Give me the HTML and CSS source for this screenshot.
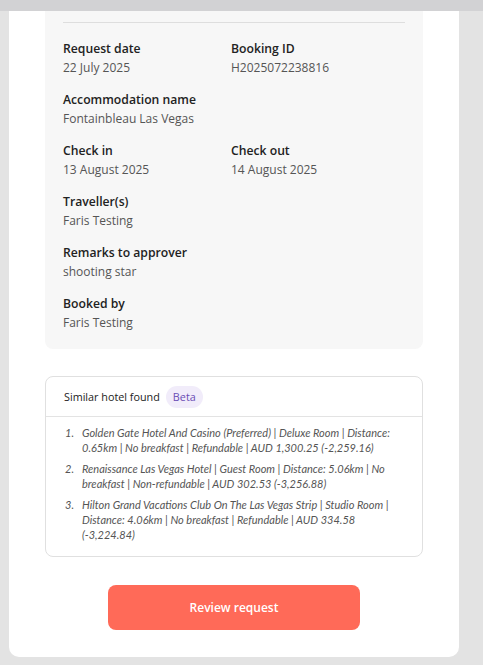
FILE: index.html
```html
<!DOCTYPE html>
<html lang="en">
<head>
    <meta charset="UTF-8">
    <title>Booking approval</title>
    <link rel="stylesheet" href="styles.css">
</head>
<body>
    <div class="topbar"></div>

    <div class="sheet">
        <div class="details">
            <h2 class="details-title">Booking details</h2>

            <div class="fields">
                <div class="field">
                    <div class="label">Request date</div>
                    <div class="value">22 July 2025</div>
                </div>
                <div class="field">
                    <div class="label">Booking ID</div>
                    <div class="value">H2025072238816</div>
                </div>
                <div class="field wide">
                    <div class="label">Accommodation name</div>
                    <div class="value">Fontainbleau Las Vegas</div>
                </div>
                <div class="field">
                    <div class="label">Check in</div>
                    <div class="value">13 August 2025</div>
                </div>
                <div class="field">
                    <div class="label">Check out</div>
                    <div class="value">14 August 2025</div>
                </div>
                <div class="field wide">
                    <div class="label">Traveller(s)</div>
                    <div class="value">Faris Testing</div>
                </div>
                <div class="field wide">
                    <div class="label">Remarks to approver</div>
                    <div class="value">shooting star</div>
                </div>
                <div class="field wide">
                    <div class="label">Booked by</div>
                    <div class="value">Faris Testing</div>
                </div>
            </div>
        </div>

        <div class="similar">
            <div class="similar-head">
                <span>Similar hotel found</span>
                <span class="badge">Beta</span>
            </div>
            <ol class="similar-list">
                <li>Golden Gate Hotel And Casino (Preferred) | Deluxe Room | Distance: 0.65km | No breakfast | Refundable | AUD 1,300.25 (-2,259.16)</li>
                <li>Renaissance Las Vegas Hotel | Guest Room | Distance: 5.06km | No breakfast | Non-refundable | AUD 302.53 (-3,256.88)</li>
                <li>Hilton Grand Vacations Club On The Las Vegas Strip | Studio Room | Distance: 4.06km | No breakfast | Refundable | AUD 334.58 (-3,224.84)</li>
            </ol>
        </div>

        <div class="actions">
            <button class="review-btn">Review request</button>
        </div>
    </div>
</body>
</html>
```

FILE: styles.css
```css
body {
    margin: 0;
    background-color: #e3e3e3;
    font-family: "Open Sans", "Noto Sans", Arial, sans-serif;
    color: #222;
}
.topbar {
    position: fixed;
    top: 0;
    left: 0;
    right: 0;
    height: 11px;
    background-color: #d2d2d4;
    z-index: 10;
}
.sheet {
    width: 378px;
    margin: -20px 0 0 9px;
    padding: 0 36px 27px;
    background-color: #fff;
    border-radius: 0 0 10px 10px;
}
.details {
    background-color: #f7f7f7;
    border-radius: 0 0 8px 8px;
    padding: 12px 18px 17px;
}
.details-title {
    margin: 0;
    padding-bottom: 9px;
    border-bottom: 1px solid #dedede;
    font-size: 14px;
    line-height: 21px;
    font-weight: 600;
}
.fields {
    display: grid;
    grid-template-columns: 168px 1fr;
    row-gap: 13px;
    margin-top: 16px;
}
.field.wide {
    grid-column: 1 / 3;
}
.label {
    font-size: 12.2px;
    line-height: 19px;
    font-weight: 600;
    color: #222;
}
.value {
    font-size: 12px;
    line-height: 19px;
    color: #555;
}
.similar {
    margin-top: 27px;
    border: 1px solid #e0e0e0;
    border-radius: 8px;
}
.similar-head {
    display: flex;
    align-items: center;
    gap: 6px;
    height: 39px;
    padding: 0 18px;
    border-bottom: 1px solid #e3e3e3;
    font-size: 10.8px;
}
.badge {
    padding: 0 7px;
    height: 22px;
    line-height: 22px;
    border-radius: 11px;
    background-color: #f1ecfa;
    color: #6a4cb5;
}
.similar-list {
    margin: 0;
    padding: 8px 18px 14px 19px;
    list-style: none;
    counter-reset: hotel;
    font-family: Lato, "Open Sans", sans-serif;
    font-style: italic;
    font-size: 11px;
    line-height: 15px;
    color: #555;
}
.similar-list li {
    counter-increment: hotel;
    padding-left: 17px;
    text-indent: -17px;
    margin-bottom: 6px;
}
.similar-list li::before {
    content: counter(hotel) ".";
    display: inline-block;
    width: 17px;
    text-indent: 0;
}
.similar-list li:last-child {
    margin-bottom: 0;
}
.actions {
    display: flex;
    justify-content: center;
    margin-top: 28px;
}
.review-btn {
    width: 252px;
    height: 45px;
    border: none;
    border-radius: 8px;
    background-color: #ff6a58;
    color: #fff;
    font-family: "Open Sans", sans-serif;
    font-size: 12px;
    font-weight: 600;
    cursor: pointer;
}
```
